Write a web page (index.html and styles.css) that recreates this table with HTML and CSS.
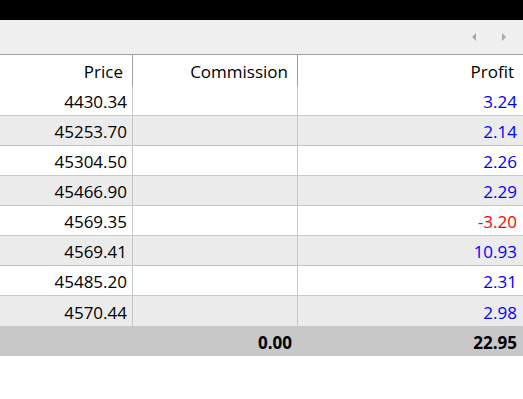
FILE: index.html
```html
<!DOCTYPE html>
<html>
<head>
<meta charset="utf-8">
<link rel="stylesheet" href="styles.css">
</head>
<body>
<div class="topbar"></div>
<div class="toolbar">
  <span class="arrow arrow-left"></span>
  <span class="arrow arrow-right"></span>
</div>
<div class="table">
  <div class="row head">
    <div class="cell">Price</div>
    <div class="cell">Commission</div>
    <div class="cell">Profit</div>
  </div>
  <div class="row">
    <div class="cell">4430.34</div><div class="cell"></div><div class="cell pos">3.24</div>
  </div>
  <div class="row alt">
    <div class="cell">45253.70</div><div class="cell"></div><div class="cell pos">2.14</div>
  </div>
  <div class="row">
    <div class="cell">45304.50</div><div class="cell"></div><div class="cell pos">2.26</div>
  </div>
  <div class="row alt">
    <div class="cell">45466.90</div><div class="cell"></div><div class="cell pos">2.29</div>
  </div>
  <div class="row">
    <div class="cell">4569.35</div><div class="cell"></div><div class="cell neg">-3.20</div>
  </div>
  <div class="row alt">
    <div class="cell">4569.41</div><div class="cell"></div><div class="cell pos">10.93</div>
  </div>
  <div class="row">
    <div class="cell">45485.20</div><div class="cell"></div><div class="cell pos">2.31</div>
  </div>
  <div class="row alt last">
    <div class="cell">4570.44</div><div class="cell"></div><div class="cell pos">2.98</div>
  </div>
  <div class="row total">
    <div class="cell"></div>
    <div class="cell">0.00</div>
    <div class="cell">22.95</div>
  </div>
</div>
</body>
</html>
```

FILE: styles.css
```css
html, body {
  margin: 0;
  padding: 0;
  background: #ffffff;
  font-family: "Open Sans", "Noto Sans", sans-serif;
  font-size: 17px;
  color: #000000;
}

.topbar {
  height: 20px;
  background: #000000;
}

.toolbar {
  height: 34px;
  background: #f0f0f0;
  border-bottom: 1px solid #a0a0a0;
  display: flex;
  align-items: center;
  justify-content: flex-end;
  gap: 26px;
  padding-right: 17px;
}

.arrow {
  width: 0;
  height: 0;
  border-top: 4px solid transparent;
  border-bottom: 4px solid transparent;
}

.arrow-left {
  border-right: 4px solid #a8a8a8;
}

.arrow-right {
  border-left: 4px solid #a8a8a8;
}

.table {
  display: flex;
  flex-direction: column;
}

.row {
  display: grid;
  grid-template-columns: 133px 165px 1fr;
  height: 30px;
  border-bottom: 1px solid #c8c8c8;
  box-sizing: border-box;
}

.row.alt {
  background: #ebebeb;
}

.row.last {
  border-bottom: none;
  height: 30px;
}

.row.head {
  height: 31px;
  border-bottom: none;
}

.cell {
  display: flex;
  align-items: center;
  justify-content: flex-end;
  padding: 2px 5px 0 0;
  border-right: 1px solid #c8c8c8;
  box-sizing: border-box;
  white-space: nowrap;
}

.cell:last-child {
  border-right: none;
  padding-right: 6px;
}

.head .cell {
  border-right-color: #a0a0a0;
  padding-right: 9px;
}

.head .cell:last-child {
  border-right: none;
  padding-right: 9px;
}

.pos {
  color: #0000ff;
}

.neg {
  color: #ff0000;
}

.row.total {
  background: #c8c8c8;
  border-bottom: none;
  font-weight: bold;
}

.total .cell {
  border-right: none;
}

.total .cell:nth-child(2) {
  padding-right: 6px;
}
```
